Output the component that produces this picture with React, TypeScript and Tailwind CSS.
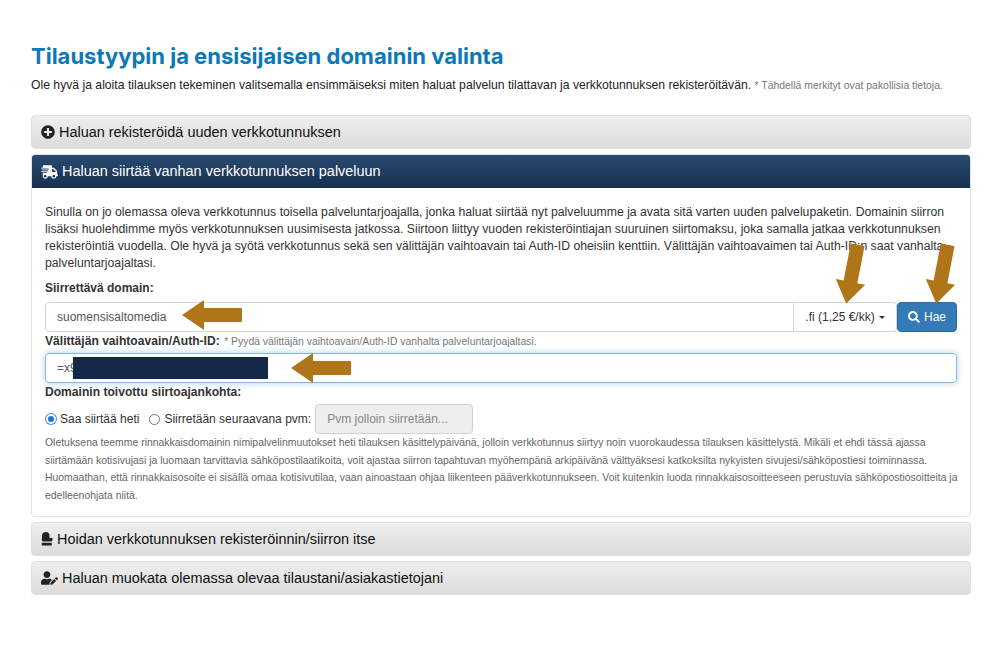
import React from "react";
import { FaPlusCircle, FaShippingFast, FaUserEdit, FaSearch } from "react-icons/fa";

function Header({ icon, children }: { icon: React.ReactNode; children: React.ReactNode }) {
  return (
    <div className="h-[34px] rounded-[4px] border border-[#e0e0e0] bg-gradient-to-b from-[#eeeeee] to-[#dcdcdc] flex items-center pl-[9px] gap-[4px] text-[14.45px] text-[#111] [font-family:'Liberation_Sans',sans-serif]">
      {icon}
      <span className="pt-[2px]">{children}</span>
    </div>
  );
}

function Arrow({ className, rotate }: { className: string; rotate: number }) {
  return (
    <svg className={"absolute " + className} width="60" height="60" viewBox="-30 -30 60 60" style={{ transform: `rotate(${rotate}deg)` }}>
      <path d="M-30 0 L-8 -15 L-8 -7 L29 -7 Q30 -7 30 -6 L30 6 Q30 7 29 7 L-8 7 L-8 15 Z" fill="#b07518" />
    </svg>
  );
}

function ArmChair() {
  return (
    <svg width="12" height="14" viewBox="0 0 12 14" className="text-[#222]">
      <path d="M1 6 V3.5 C1 1.2 2.8 0 5 0 C7.2 0 8.5 1.2 8.5 3.5 V6.5 C9 6 9.5 5.6 10.3 5.8 C11.6 6.1 12 7.2 11.4 8.2 L10.6 9.6 H1.6 C0.7 8.6 0.5 7 1 6 Z M0.8 10.8 H10.8 V13.6 H0.8 Z" fill="currentColor" />
    </svg>
  );
}

export default function App() {
  return (
    <div className="w-[1000px] h-[650px] bg-white pt-[44px] pl-[31px] pr-[29px] text-[#333] [font-family:'Liberation_Sans',sans-serif] overflow-hidden">
      <h1 className="text-[22px] leading-[25px] font-bold text-[#0b78b8] [font-family:Inter,sans-serif]">Tilaustyypin ja ensisijaisen domainin valinta</h1>
      <p className="mt-[8px] text-[12.2px] leading-[16px] text-[#222] whitespace-nowrap">
        Ole hyvä ja aloita tilauksen tekeminen valitsemalla ensimmäiseksi miten haluat palvelun tilattavan ja verkkotunnuksen rekisteröitävän. <span className="text-[10.45px] text-[#777]">* Tähdellä merkityt ovat pakollisia tietoja.</span>
      </p>

      <div className="mt-[21px] flex flex-col gap-[5px]">
        <Header icon={<FaPlusCircle className="w-[14px] h-[14px] text-[#222]" />}>Haluan rekisteröidä uuden verkkotunnuksen</Header>

        <div className="h-[363px] rounded-[4px] border border-[#e2e2e2] overflow-hidden">
          <div className="h-[33px] bg-gradient-to-b from-[#2a4a72] to-[#17304f] flex items-center pl-[9px] gap-[4px] text-[14.45px] text-white">
            <FaShippingFast className="w-[17px] h-[14px]" />
            <span>Haluan siirtää vanhan verkkotunnuksen palveluun</span>
          </div>
          <div className="relative px-[13px] pt-[16px]">
            <p className="text-[12.24px] leading-[17px] text-[#333] whitespace-nowrap">
              Sinulla on jo olemassa oleva verkkotunnus toisella palveluntarjoajalla, jonka haluat siirtää nyt palveluumme ja avata sitä varten uuden palvelupaketin. Domainin siirron<br />
              lisäksi huolehdimme myös verkkotunnuksen uusimisesta jatkossa. Siirtoon liittyy vuoden rekisteröintiajan suuruinen siirtomaksu, joka samalla jatkaa verkkotunnuksen<br />
              rekisteröintiä vuodella. Ole hyvä ja syötä verkkotunnus sekä sen välittäjän vaihtoavain tai Auth-ID oheisiin kenttiin. Välittäjän vaihtoavaimen tai Auth-ID:n saat vanhalta<br />
              palveluntarjoajaltasi.
            </p>

            <label className="block mt-[8px] text-[12px] leading-[16px] font-bold text-[#333]">Siirrettävä domain:</label>
            <div className="mt-[6px] flex h-[30px] text-[12px]">
              <div className="flex-1 border border-[#d5d5d5] rounded-l-[4px] pl-[11px] flex items-center text-[#555]">suomensisaltomedia</div>
              <div className="w-[103px] border border-l-0 border-[#d5d5d5] rounded-r-[4px] flex items-center justify-center gap-[4px] text-[#333]">
                .fi (1,25 €/kk)
                <span className="w-0 h-0 border-x-[3px] border-x-transparent border-t-[3px] border-t-[#333]" />
              </div>
              <div className="w-[60px] bg-[#337ab7] border border-[#2e6da4] rounded-[4px] flex items-center justify-center gap-[4px] text-white">
                <FaSearch className="w-[12px] h-[12px]" />
                Hae
              </div>
            </div>

            <div className="leading-[15px] whitespace-nowrap">
              <span className="text-[12.1px] font-bold text-[#333]">Välittäjän vaihtoavain/Auth-ID:</span>{" "}
              <span className="text-[10.4px] text-[#777]">* Pyydä välittäjän vaihtoavain/Auth-ID vanhalta palveluntarjoajaltasi.</span>
            </div>
            <div className="relative mt-[4px] h-[30px] border border-[#8ab8e0] rounded-[4px] shadow-[0_0_6px_rgba(102,175,233,0.6)] pl-[11px] flex items-center text-[12px] text-[#555]">
              =x9
              <div className="absolute left-[27px] top-[3px] w-[195px] h-[22px] bg-[#14294a]" />
            </div>

            <label className="block mt-[1px] text-[12.1px] leading-[16px] font-bold text-[#333]">Domainin toivottu siirtoajankohta:</label>
            <div className="mt-[4px] flex items-center h-[30px] text-[12px] text-[#333]">
              <span className="ml-[1px] w-[10px] h-[10px] rounded-full bg-[#1a73e8] border-[2px] border-white ring-1 ring-[#4a90e2]" />
              <span className="ml-[4px]">Saa siirtää heti</span>
              <span className="ml-[10px] w-[11px] h-[11px] rounded-full bg-white border border-[#777]" />
              <span className="ml-[4px]">Siirretään seuraavana pvm:</span>
              <div className="ml-[4px] w-[158px] h-[30px] bg-[#eeeeee] border border-[#d0d0d0] rounded-[4px] pl-[11px] flex items-center text-[#888]">Pvm jolloin siirretään...</div>
            </div>

            <p className="text-[10.43px] leading-[17.7px] text-[#666] whitespace-nowrap">
              Oletuksena teemme rinnakkaisdomainin nimipalvelinmuutokset heti tilauksen käsittelypäivänä, jolloin verkkotunnus siirtyy noin vuorokaudessa tilauksen käsittelystä. Mikäli et ehdi tässä ajassa<br />
              siirtämään kotisivujasi ja luomaan tarvittavia sähköpostilaatikoita, voit ajastaa siirron tapahtuvan myöhempänä arkipäivänä välttyäksesi katkoksilta nykyisten sivujesi/sähköpostiesi toiminnassa.<br />
              Huomaathan, että rinnakkaisosoite ei sisällä omaa kotisivutilaa, vaan ainoastaan ohjaa liikenteen pääverkkotunnukseen. Voit kuitenkin luoda rinnakkaisosoitteeseen perustuvia sähköpostiosoitteita ja<br />
              edelleenohjata niitä.
            </p>

            <Arrow className="left-[150px] top-[97px]" rotate={0} />
            <Arrow className="left-[259px] top-[150px]" rotate={0} />
            <Arrow className="left-[790px] top-[56px]" rotate={-79} />
            <Arrow className="left-[880px] top-[56px]" rotate={-79} />
          </div>
        </div>

        <Header icon={<ArmChair />}>Hoidan verkkotunnuksen rekisteröinnin/siirron itse</Header>
        <Header icon={<FaUserEdit className="w-[17px] h-[14px] text-[#222]" />}>Haluan muokata olemassa olevaa tilaustani/asiakastietojani</Header>
      </div>
    </div>
  );
}
